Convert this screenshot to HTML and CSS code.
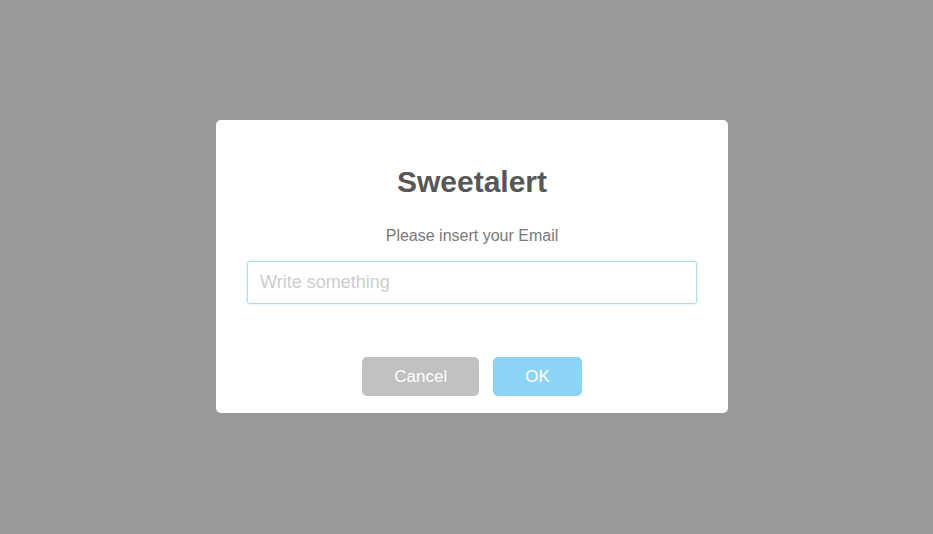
FILE: index.html
```html
<!DOCTYPE html>
<html>
<head>
<meta charset="utf-8">
<link rel="stylesheet" href="styles.css">
</head>
<body>
<div class="overlay">
  <div class="alert">
    <h2 class="alert-title">Sweetalert</h2>
    <p class="alert-text">Please insert your Email</p>
    <input class="alert-input" type="text" placeholder="Write something">
    <div class="alert-buttons">
      <button class="btn btn-cancel">Cancel</button>
      <button class="btn btn-ok">OK</button>
    </div>
  </div>
</div>
</body>
</html>
```

FILE: styles.css
```css
html, body {
  margin: 0;
  padding: 0;
  height: 100%;
}
body {
  background: #999999;
  font-family: "Liberation Sans", Arial, sans-serif;
}
.overlay {
  box-sizing: border-box;
  height: 100%;
  padding: 0 0 1px 11px;
  display: flex;
  align-items: center;
  justify-content: center;
}
.alert {
  box-sizing: border-box;
  width: 512px;
  background: #ffffff;
  border-radius: 5px;
  padding: 17px 31px 17px;
  display: flex;
  flex-direction: column;
  align-items: stretch;
  text-align: center;
}
.alert-title {
  margin: 25px 0;
  font-size: 30px;
  line-height: 40px;
  font-weight: 600;
  color: #575757;
}
.alert-text {
  margin: 0;
  font-size: 16px;
  line-height: 18.4px;
  font-weight: 300;
  color: #797979;
}
.alert-input {
  box-sizing: border-box;
  width: 100%;
  height: 43px;
  margin: 16px 0 0;
  padding: 0 12px;
  font-family: "Liberation Sans", Arial, sans-serif;
  font-size: 18px;
  color: #575757;
  border: 1px solid #b4dbed;
  border-radius: 3px;
  box-shadow: 0 0 3px #c4e6f5;
  outline: none;
  background: #ffffff;
}
.alert-input::placeholder {
  color: #cdcdcd;
}
.alert-buttons {
  margin-top: 53px;
  display: flex;
  justify-content: center;
  gap: 14px;
}
.btn {
  font-family: "Liberation Sans", Arial, sans-serif;
  font-size: 17px;
  font-weight: 500;
  line-height: 19.5px;
  color: #ffffff;
  border: none;
  border-radius: 5px;
  padding: 10px 32px;
  margin: 0;
  cursor: pointer;
}
.btn-cancel {
  background: #c1c1c1;
}
.btn-ok {
  background: #8cd4f5;
}
```
